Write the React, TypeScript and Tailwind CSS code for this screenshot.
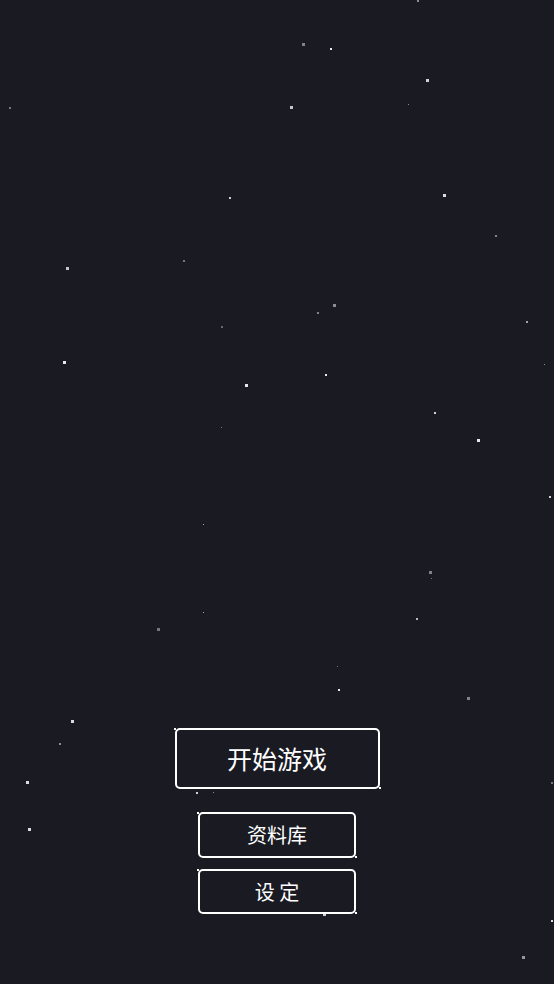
import React from "react";

// star field: [x, y, size, opacity]
const stars: [number, number, number, number][] = [
  [417, 0, 2, 0.5], [302, 43, 3, 0.45], [330, 48, 2, 0.9], [426, 79, 3, 0.8],
  [408, 104, 1, 0.5], [9, 107, 2, 0.4], [290, 106, 3, 0.75], [229, 197, 2, 0.8],
  [443, 194, 3, 0.85], [495, 235, 2, 0.45], [66, 267, 3, 0.75], [183, 260, 2, 0.4],
  [333, 304, 3, 0.5], [317, 312, 2, 0.45], [221, 326, 2, 0.35], [526, 321, 2, 0.6],
  [63, 361, 3, 0.9], [544, 364, 1, 0.5], [245, 384, 3, 0.9], [325, 374, 2, 0.9],
  [434, 412, 2, 0.8], [477, 439, 3, 0.9], [221, 427, 1, 0.4], [549, 496, 2, 0.8],
  [203, 524, 1, 0.6], [429, 571, 3, 0.45], [431, 578, 1, 0.4], [203, 612, 1, 0.6],
  [416, 618, 2, 0.7], [157, 628, 3, 0.4], [337, 666, 1, 0.4], [338, 689, 2, 0.9],
  [467, 697, 3, 0.45], [71, 720, 3, 0.85], [59, 743, 2, 0.5], [26, 781, 3, 0.85],
  [551, 782, 2, 0.4], [196, 792, 2, 0.8], [213, 792, 1, 0.5], [28, 828, 3, 0.85],
  [219, 882, 3, 0.55], [323, 913, 3, 0.8], [551, 920, 2, 0.85], [522, 956, 3, 0.55],
];

const MenuButton = ({
  label,
  className,
  textClass,
}: {
  label: string;
  className: string;
  textClass: string;
}) => {
  return (
    <button
      className={`relative flex items-center justify-center rounded-[5px] border-2 border-white bg-[#1a1a23] text-white ${className}`}
    >
      {/* little outward ticks at the corners */}
      <span className="absolute -left-[3px] -top-[2px] h-[2px] w-[2px] bg-white" />
      <span className="absolute -right-[3px] -bottom-[2px] h-[2px] w-[2px] bg-white" />
      <span className={textClass}>{label}</span>
    </button>
  );
};

export default function App() {
  return (
    <div
      className="relative flex h-[984px] w-full flex-col items-center justify-end overflow-hidden bg-[#1a1a23] pb-[70px]"
      style={{ fontFamily: '"Noto Sans CJK SC", "Noto Sans", sans-serif' }}
    >
      {stars.map(([x, y, s, o], i) => (
        <div
          key={i}
          className="absolute bg-white"
          style={{ left: x, top: y, width: s, height: s, opacity: o }}
        />
      ))}

      <div className="relative flex flex-col items-center">
        <MenuButton
          label="开始游戏"
          className="h-[61px] w-[205px]"
          textClass="text-[25px] leading-none"
        />
        <div className="mt-[23px] flex flex-col items-center gap-[11px]">
          <MenuButton
            label="资料库"
            className="h-[46px] w-[158px]"
            textClass="text-[20px] leading-none"
          />
          <MenuButton
            label="设 定"
            className="h-[45px] w-[158px]"
            textClass="text-[20px] leading-none"
          />
        </div>
      </div>
    </div>
  );
}
